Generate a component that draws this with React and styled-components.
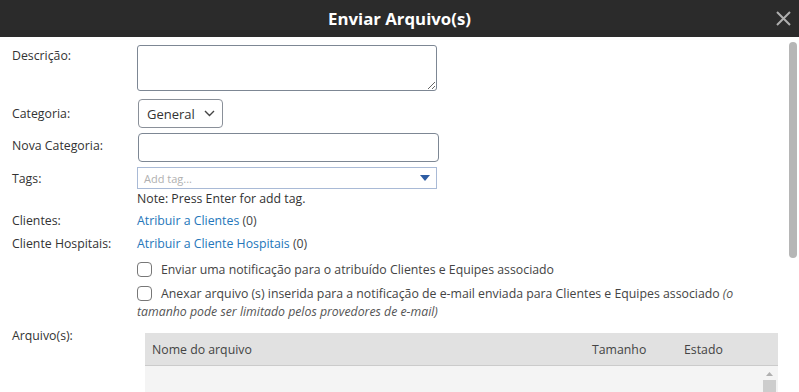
import React from 'react';
import styled, { createGlobalStyle } from 'styled-components';

const Global = createGlobalStyle`
  html, body { margin: 0; padding: 0; background: #fff; }
  body {
    font-family: "Open Sans", "Liberation Sans", sans-serif;
    color: #333;
    overflow: hidden;
  }
  * { box-sizing: border-box; }
`;

const Modal = styled.div`
  width: 799px;
  height: 392px;
  display: flex;
  flex-direction: column;
  position: relative;
  overflow: hidden;
  background: #fff;
`;

const Header = styled.header`
  height: 37px;
  flex: none;
  background: #2b2b2b;
  display: grid;
  grid-template-columns: 1fr auto 1fr;
  align-items: center;
`;

const Title = styled.h1`
  grid-column: 2;
  margin: 0;
  color: #fff;
  font-size: 16.8px;
  font-weight: 700;
  line-height: 20px;
`;

const Close = styled.button`
  grid-column: 3;
  justify-self: end;
  margin-right: 8px;
  width: 16px;
  height: 16px;
  padding: 0;
  border: 0;
  background: transparent;
  display: flex;
  align-items: center;
  justify-content: center;
  cursor: pointer;
`;

const Body = styled.div`
  flex: 1;
  padding: 8px 0 0 12px;
  display: flex;
  flex-direction: column;
`;

const Row = styled.div`
  display: grid;
  grid-template-columns: 125px 1fr;
  align-items: ${p => p.$align || 'start'};
  margin-top: ${p => p.$mt || 0}px;
`;

const Label = styled.div`
  font-size: 12.3px;
  line-height: 17px;
  color: #333;
  padding-top: ${p => p.$pt || 0}px;
`;

const Field = styled.div`
  display: flex;
  flex-direction: column;
  align-items: flex-start;
`;

const TextArea = styled.textarea`
  width: 300px;
  height: 46px;
  border: 1px solid #7d8794;
  border-radius: 3px;
  margin: 0;
  font-family: inherit;
  display: block;
`;

const Select = styled.div`
  width: 85px;
  height: 29px;
  margin-left: 1px;
  border: 1px solid #8a9099;
  border-radius: 4px;
  display: flex;
  align-items: center;
  gap: 9px;
  padding-left: 8px;
  font-size: 13px;
  color: #333;
`;

const Input = styled.input`
  width: 301px;
  height: 29px;
  margin: 0 0 0 1px;
  border: 1px solid #7d8794;
  border-radius: 4px;
  font-family: inherit;
  display: block;
`;

const TagBox = styled.div`
  width: 300px;
  height: 22px;
  border: 1px solid #a9bad6;
  display: flex;
  align-items: center;
  justify-content: space-between;
  padding: 0 6px 0 6px;
`;

const Placeholder = styled.span`
  font-size: 11px;
  color: #b0b0b0;
`;

const Note = styled.div`
  font-size: 12.3px;
  line-height: 17px;
  margin-top: 1px;
  color: #333;
`;

const Text = styled.div`
  font-size: 12.3px;
  line-height: 17px;
  color: #444;
`;

const Link = styled.a`
  color: #2476ba;
  text-decoration: none;
`;

const CheckBlock = styled.div`
  margin-left: 125px;
  margin-top: ${p => p.$mt || 0}px;
  width: 630px;
  font-size: 12.3px;
  line-height: 18px;
  color: #444;
`;

const Box = styled.span`
  display: inline-block;
  width: 15px;
  height: 15px;
  border: 1px solid #777;
  border-radius: 4px;
  vertical-align: -3px;
  margin-right: 9px;
  background: #fff;
`;

const Hint = styled.i`
  color: #555;
`;

const Table = styled.div`
  margin-left: 8px;
  margin-top: 6px;
  width: 633px;
  display: flex;
  flex-direction: column;
`;

const THead = styled.div`
  height: 33px;
  background: #e1e1e1;
  border-bottom: 1px solid #cbcbcb;
  display: grid;
  grid-template-columns: 440px 92px 1fr;
  align-items: center;
  padding-left: 7px;
  font-size: 12.3px;
  color: #444;
`;

const TBody = styled.div`
  height: 60px;
  background: #f4f4f4;
  display: flex;
  justify-content: flex-end;
  padding-right: 2px;
`;

const ScrollTrack = styled.div`
  width: 13px;
  display: flex;
  flex-direction: column;
  align-items: center;
  padding-top: 6px;
  gap: 4px;
`;

const ScrollThumb = styled.div`
  width: 13px;
  flex: 1;
  background: #cdcdcd;
`;

const PageScroll = styled.div`
  position: absolute;
  right: 2px;
  top: 42px;
  width: 8px;
  height: 216px;
  border-radius: 4px;
  background: #b6b6b6;
`;

export default function App() {
  return (
    <>
      <Global />
      <Modal>
        <Header>
          <Title>Enviar Arquivo(s)</Title>
          <Close aria-label="Fechar">
            <svg width="15" height="15" viewBox="0 0 15 15">
              <path d="M1 1 L14 14 M14 1 L1 14" stroke="#aeaeae" strokeWidth="2" />
            </svg>
          </Close>
        </Header>
        <Body>
          <Row>
            <Label $pt={2}>Descrição:</Label>
            <Field><TextArea /></Field>
          </Row>
          <Row $align="center" $mt={8}>
            <Label>Categoria:</Label>
            <Field>
              <Select>
                General
                <svg width="11" height="7" viewBox="0 0 11 7">
                  <path d="M1 1 L5.5 5.5 L10 1" stroke="#444" strokeWidth="1.4" fill="none" />
                </svg>
              </Select>
            </Field>
          </Row>
          <Row $align="start" $mt={5}>
            <Label $pt={4}>Nova Categoria:</Label>
            <Field><Input /></Field>
          </Row>
          <Row $mt={5}>
            <Label $pt={3}>Tags:</Label>
            <Field>
              <TagBox>
                <Placeholder>Add tag...</Placeholder>
                <svg width="10" height="6" viewBox="0 0 10 6">
                  <path d="M0 0 H10 L5 6 Z" fill="#2d5ca3" />
                </svg>
              </TagBox>
              <Note>Note: Press Enter for add tag.</Note>
            </Field>
          </Row>
          <Row $mt={5}>
            <Label>Clientes:</Label>
            <Text><Link href="#">Atribuir a Clientes</Link> (0)</Text>
          </Row>
          <Row $mt={6}>
            <Label>Cliente Hospitais:</Label>
            <Text><Link href="#">Atribuir a Cliente Hospitais</Link> (0)</Text>
          </Row>
          <CheckBlock $mt={9}>
            <Box />Enviar uma notificação para o atribuído Clientes e Equipes associado
          </CheckBlock>
          <CheckBlock $mt={6}>
            <Box />Anexar arquivo (s) inserida para a notificação de e-mail enviada para Clientes e Equipes associado{' '}
            <Hint>(o tamanho pode ser limitado pelos provedores de e-mail)</Hint>
          </CheckBlock>
          <Row $mt={6}>
            <Label>Arquivo(s):</Label>
            <Table>
              <THead>
                <span>Nome do arquivo</span>
                <span>Tamanho</span>
                <span>Estado</span>
              </THead>
              <TBody>
                <ScrollTrack>
                  <svg width="7" height="4" viewBox="0 0 7 4">
                    <path d="M0 4 L3.5 0 L7 4 Z" fill="#b0b0b0" />
                  </svg>
                  <ScrollThumb />
                </ScrollTrack>
              </TBody>
            </Table>
          </Row>
        </Body>
        <PageScroll />
      </Modal>
    </>
  );
}
